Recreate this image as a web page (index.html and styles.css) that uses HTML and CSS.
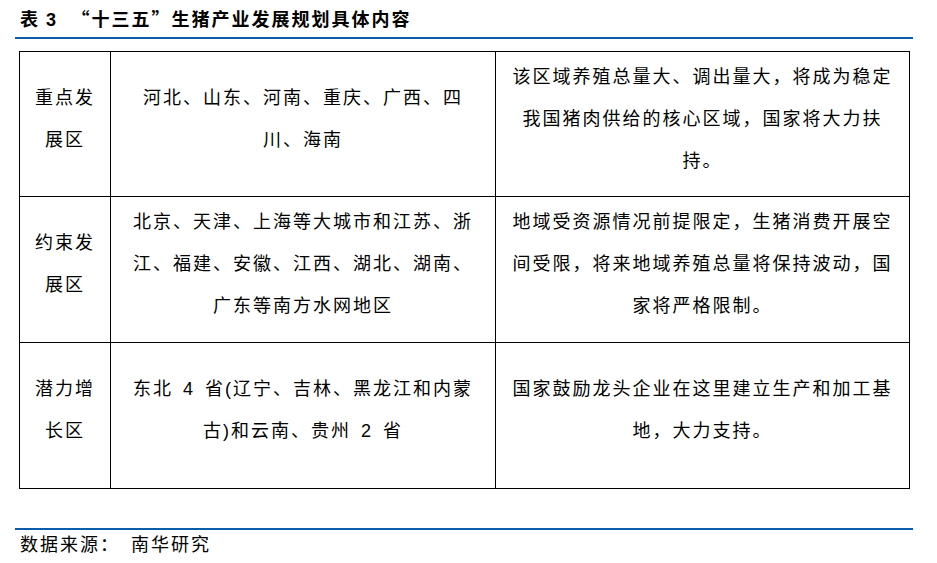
FILE: index.html
```html
<!DOCTYPE html>
<html lang="zh-CN">
<head>
<meta charset="utf-8">
<title>“十三五”生猪产业发展规划具体内容</title>
<link rel="stylesheet" href="styles.css">
</head>
<body>
<div class="page">
  <div class="title"><span class="title-num">表 3</span><span class="title-text">“十三五”生猪产业发展规划具体内容</span></div>
  <table class="plan">
    <colgroup>
      <col class="c1">
      <col class="c2">
      <col class="c3">
    </colgroup>
    <tbody>
      <tr class="r1">
        <td>重点发展区</td>
        <td>河北、山东、河南、重庆、广西、四川、海南</td>
        <td>该区域养殖总量大、调出量大，将成为稳定我国猪肉供给的核心区域，国家将大力扶持。</td>
      </tr>
      <tr class="r2">
        <td>约束发展区</td>
        <td>北京、天津、上海等大城市和江苏、浙江、福建、安徽、江西、湖北、湖南、广东等南方水网地区</td>
        <td>地域受资源情况前提限定，生猪消费开展空间受限，将来地域养殖总量将保持波动，国家将严格限制。</td>
      </tr>
      <tr class="r3">
        <td>潜力增长区</td>
        <td>东北 4 省(辽宁、吉林、黑龙江和内蒙古)和云南、贵州 2 省</td>
        <td>国家鼓励龙头企业在这里建立生产和加工基地，大力支持。</td>
      </tr>
    </tbody>
  </table>
  <div class="source">数据来源：<span class="source-name">南华研究</span></div>
</div>
</body>
</html>
```

FILE: styles.css
```css
html, body {
  margin: 0;
  padding: 0;
  background: #ffffff;
}

body {
  font-family: "Liberation Sans", "Noto Sans CJK SC", sans-serif;
  color: #000000;
}

.page {
  width: 898px;
  margin-left: 15px;
}

.title {
  height: 37px;
  line-height: 36px;
  padding-left: 5px;
  font-size: 18px;
  font-weight: 700;
  border-bottom: 2px solid #0a5da8;
  box-sizing: content-box;
  white-space: nowrap;
}

.title-num {
  letter-spacing: 1.5px;
}

.title-text {
  font-family: "Noto Sans CJK SC", sans-serif;
  margin-left: 14px;
  letter-spacing: 2px;
}

.plan {
  margin-top: 12px;
  margin-left: 4px;
  width: 890px;
  table-layout: fixed;
  border-collapse: collapse;
}

.plan .c1 { width: 91px; }
.plan .c2 { width: 385px; }
.plan .c3 { width: 414px; }

.plan td {
  border: 1px solid #000000;
  padding: 0 14px 11px;
  text-align: center;
  vertical-align: middle;
  font-size: 18px;
  line-height: 42px;
  letter-spacing: 2px;
  word-spacing: 3px;
}

.plan .r1 { height: 145px; }
.plan .r2 { height: 146px; }
.plan .r3 { height: 146px; }

.source {
  margin-top: 39px;
  border-top: 2px solid #0a5da8;
  padding-left: 5px;
  line-height: 30px;
  font-size: 18px;
  letter-spacing: 2px;
}

.source-name {
  margin-left: 11px;
}
```
